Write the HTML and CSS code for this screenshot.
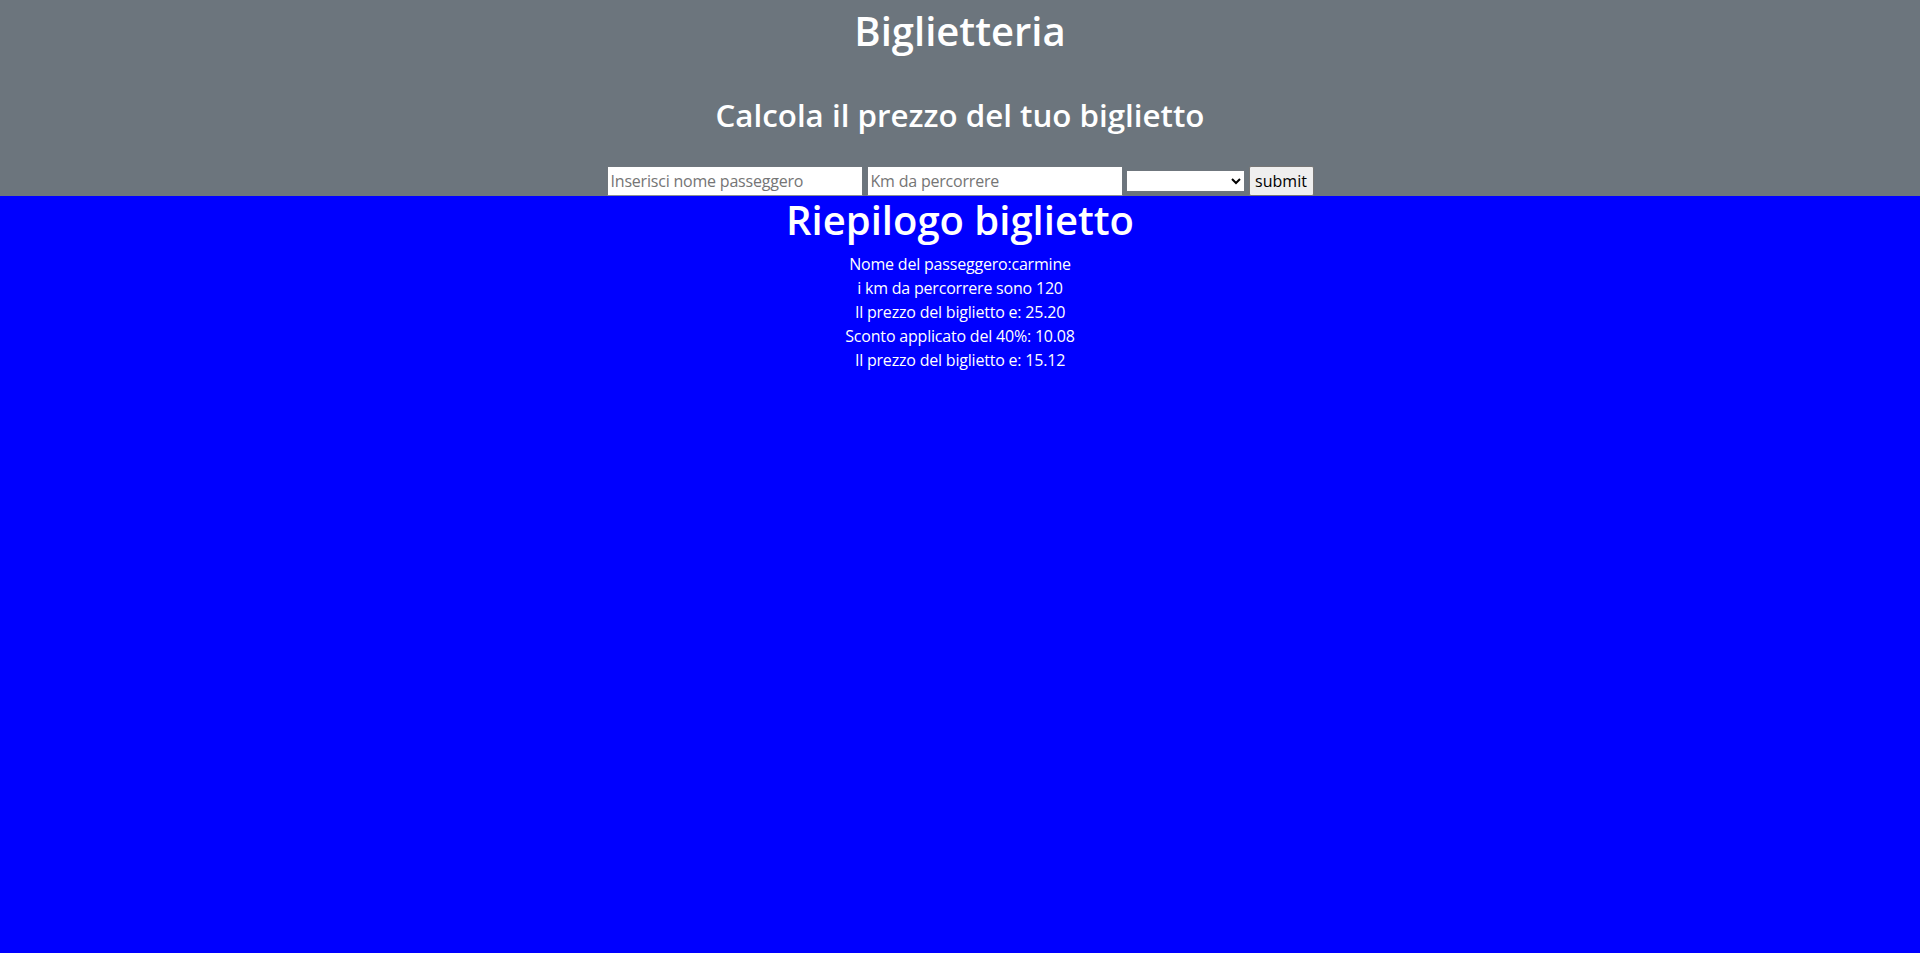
FILE: index.html
```html
<!DOCTYPE html>
<html lang="it">
<head>
<meta charset="utf-8">
<title>Biglietteria</title>
<link rel="stylesheet" href="styles.css">
</head>
<body>
<header class="hero">
  <h1 class="title">Biglietteria</h1>
  <h2 class="subtitle">Calcola il prezzo del tuo biglietto</h2>
  <form class="ticket-form">
    <input class="field" type="text" placeholder="Inserisci nome passeggero">
    <input class="field field-km" type="text" placeholder="Km da percorrere">
    <select class="age-select">
      <option></option>
      <option>minorenne</option>
      <option>maggiorenne</option>
      <option>over 65</option>
    </select>
    <button class="submit-btn" type="button">submit</button>
  </form>
</header>
<main class="summary">
  <h1 class="summary-title">Riepilogo biglietto</h1>
  <p class="line">Nome del passeggero:carmine</p>
  <p class="line">i km da percorrere sono 120</p>
  <p class="line">Il prezzo del biglietto e: 25.20</p>
  <p class="line">Sconto applicato del 40%: 10.08</p>
  <p class="line">Il prezzo del biglietto e: 15.12</p>
</main>
</body>
</html>
```

FILE: styles.css
```css
* { box-sizing: border-box; }

html, body {
  margin: 0;
  padding: 0;
  min-height: 100%;
}

body {
  background: #0000ff;
  color: #ffffff;
  font-family: "Open Sans", "Noto Sans", sans-serif;
  font-size: 16px;
  line-height: 24px;
  text-align: center;
  min-height: 953px;
}

.hero {
  background: #6c757d;
  padding-top: 7px;
  display: flex;
  flex-direction: column;
  align-items: center;
}

.title {
  margin: 0;
  font-size: 40px;
  line-height: 48px;
  font-weight: 600;
}

.subtitle {
  margin: 41px 0 0;
  font-size: 31.3px;
  line-height: 38px;
  font-weight: 600;
}

.ticket-form {
  margin-top: 32px;
  display: flex;
  align-items: center;
}

.field {
  width: 256px;
  height: 30px;
  border: 1px solid #6f767d;
  border-bottom-color: #8a8f94;
  background: #ffffff;
  padding: 0 3px;
  font-family: inherit;
  font-size: 16px;
  letter-spacing: -0.2px;
  color: #212529;
  outline: none;
}

.field::placeholder { color: #757575; }

.field-km { margin-left: 4px; }

.age-select {
  margin-left: 3px;
  width: 119px;
  height: 22px;
  border: 1px solid #6f767d;
  background: #ffffff;
  font-family: inherit;
  font-size: 13px;
}

.submit-btn {
  margin-left: 4px;
  width: 65px;
  height: 30px;
  border: 1px solid #767676;
  border-radius: 2px;
  background: #efefef;
  color: #000000;
  font-family: inherit;
  font-size: 16px;
  padding: 0;
}

.summary-title {
  margin: 0 0 8px;
  font-size: 40px;
  line-height: 48px;
  font-weight: 600;
}

.line {
  margin: 0;
  letter-spacing: -0.2px;
}
```
